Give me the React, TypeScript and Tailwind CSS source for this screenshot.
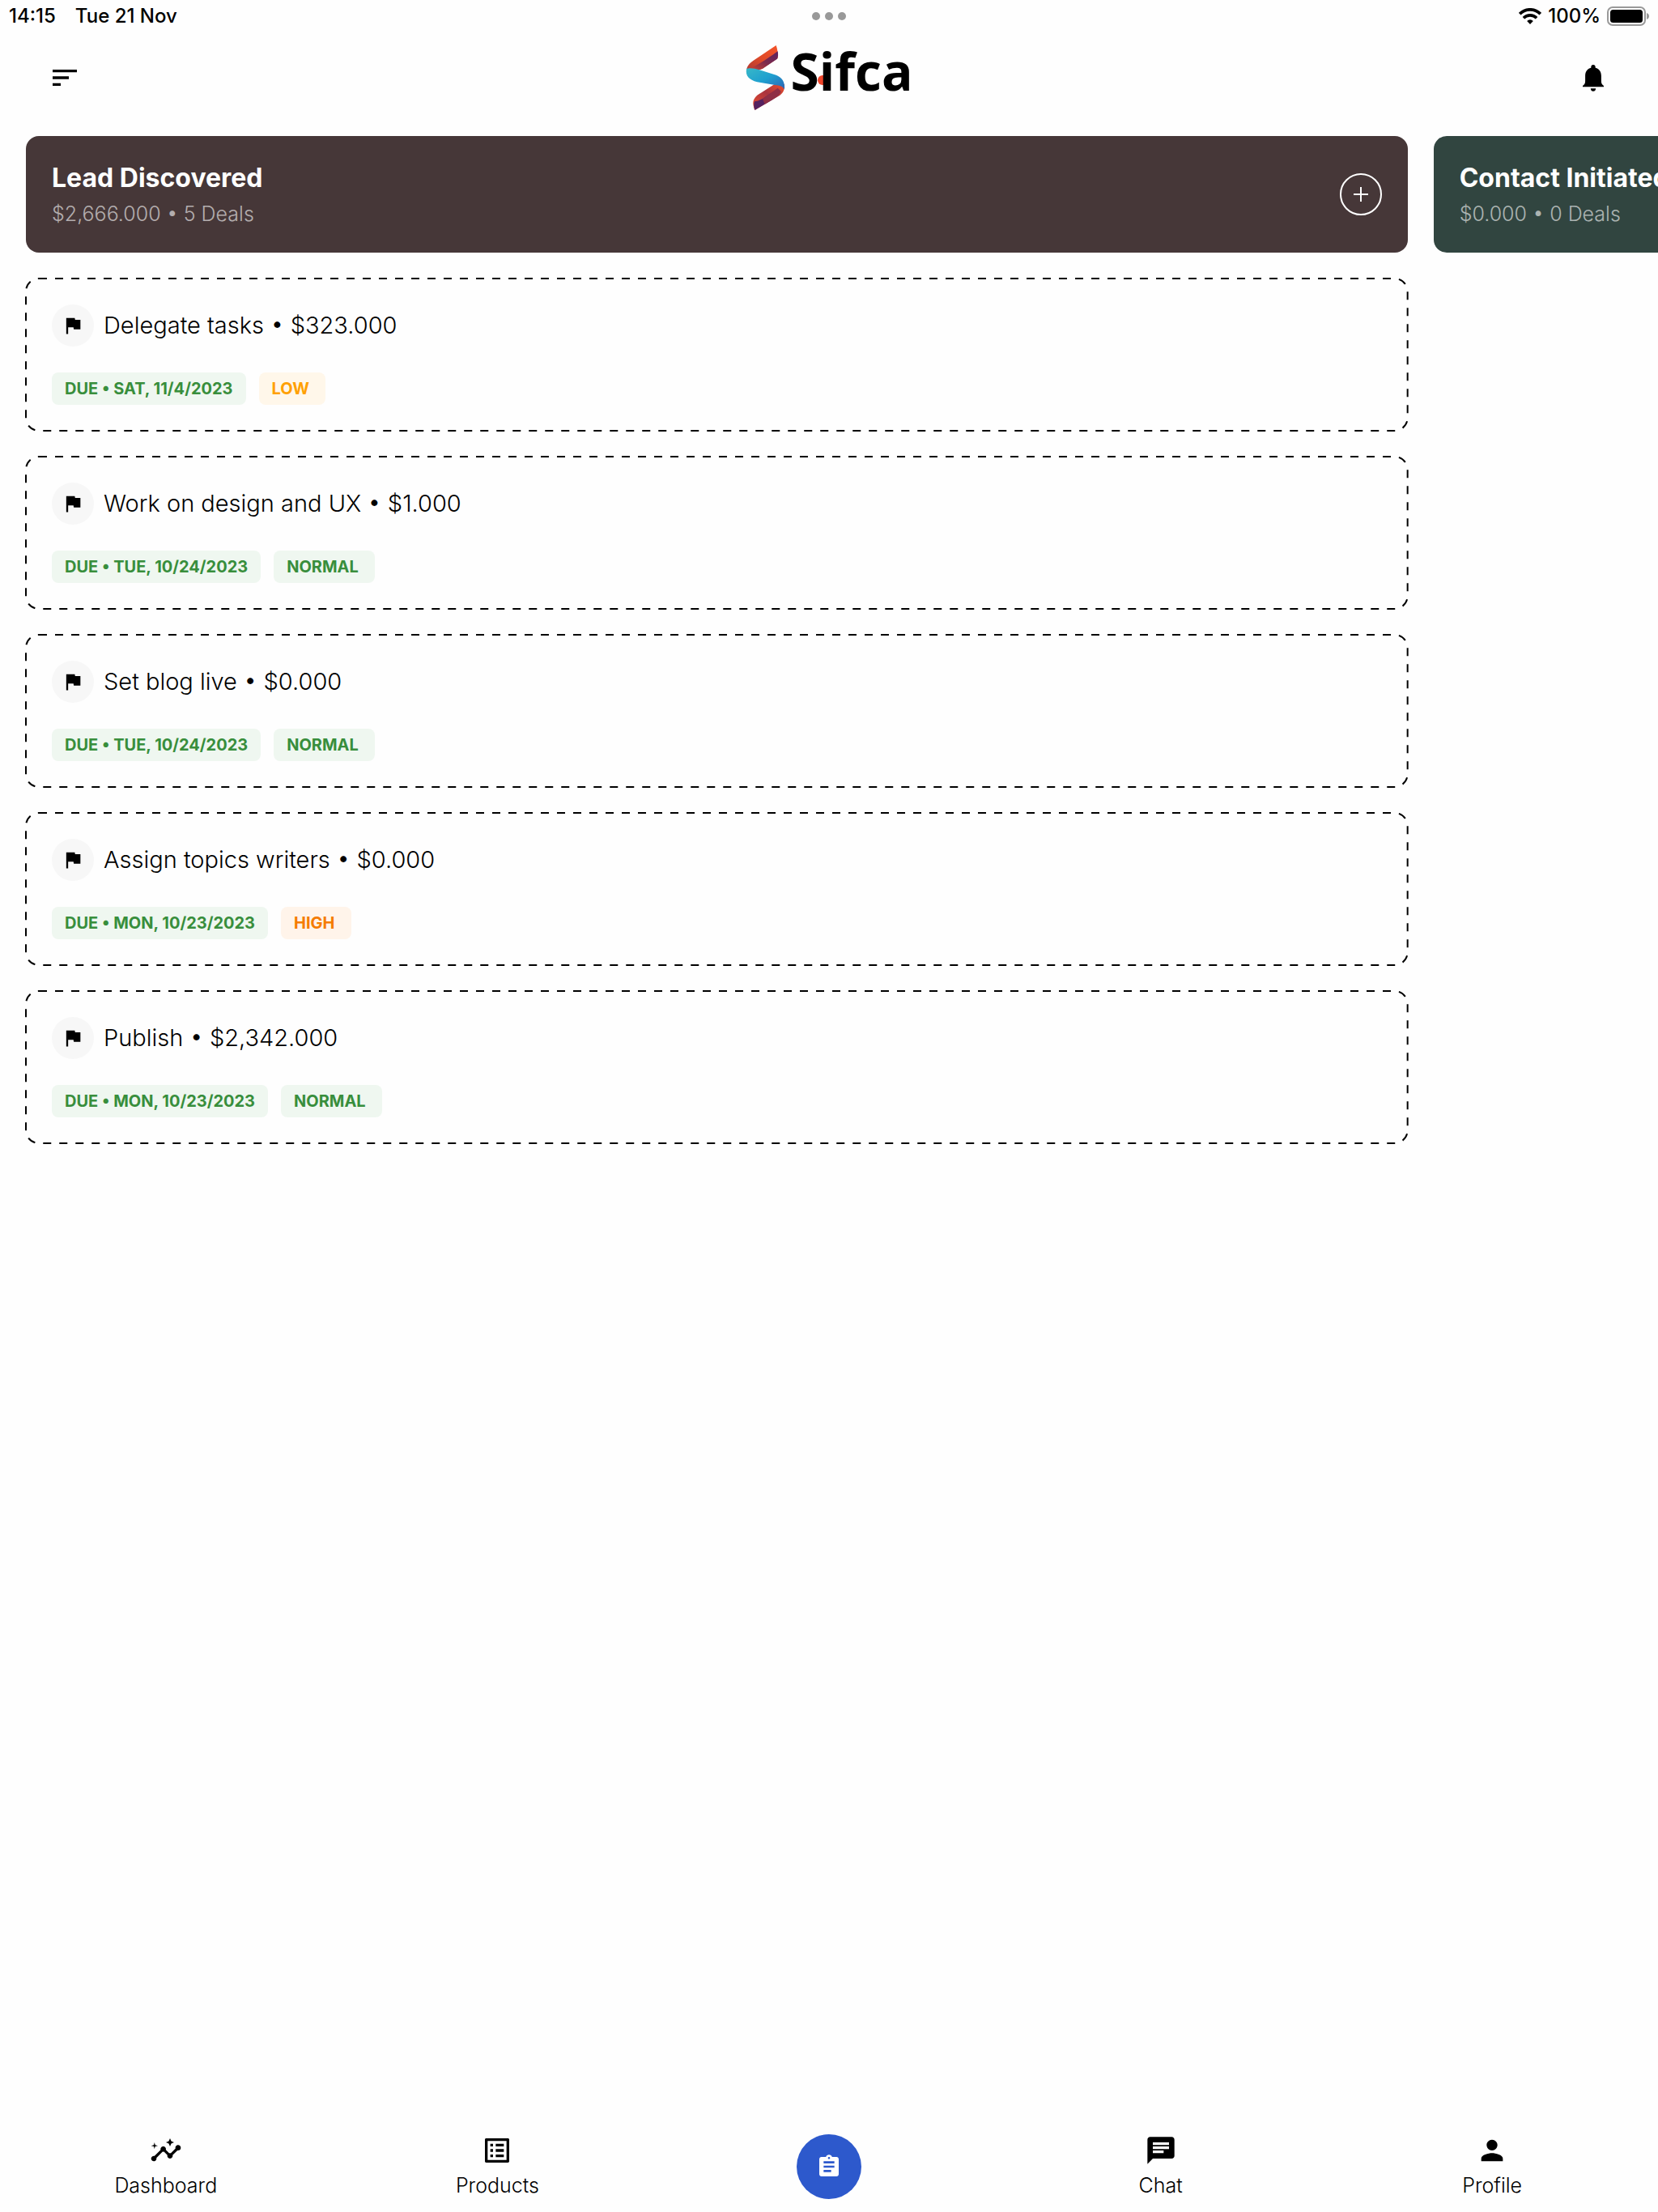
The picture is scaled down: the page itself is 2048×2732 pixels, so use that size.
import React from "react";
import {
  MdAssignment,
  MdChat,
  MdFlag,
  MdInsights,
  MdOutlineListAlt,
  MdPerson,
  MdSort,
} from "react-icons/md";

type Priority = "LOW" | "NORMAL" | "HIGH";

type Deal = {
  title: string;
  amount: string;
  due: string;
  priority: Priority;
};

type Stage = {
  name: string;
  total: string;
  color: string;
  deals: Deal[];
};

const STAGES: Stage[] = [
  {
    name: "Lead Discovered",
    total: "$2,666.000",
    color: "bg-[#463738]",
    deals: [
      { title: "Delegate tasks", amount: "$323.000", due: "SAT, 11/4/2023", priority: "LOW" },
      { title: "Work on design and UX", amount: "$1.000", due: "TUE, 10/24/2023", priority: "NORMAL" },
      { title: "Set blog live", amount: "$0.000", due: "TUE, 10/24/2023", priority: "NORMAL" },
      { title: "Assign topics writers", amount: "$0.000", due: "MON, 10/23/2023", priority: "HIGH" },
      { title: "Publish", amount: "$2,342.000", due: "MON, 10/23/2023", priority: "NORMAL" },
    ],
  },
  {
    name: "Contact Initiated",
    total: "$0.000",
    color: "bg-[#314540]",
    deals: [],
  },
];

const PRIORITY_STYLES: Record<Priority, string> = {
  LOW: "bg-[#fff7ea] text-[#ffa000]",
  NORMAL: "bg-[#eff7f0] text-[#388e3c]",
  HIGH: "bg-[#fff4ea] text-[#f57c00]",
};

const StatusBar = () => (
  <div className="grid h-10 grid-cols-3 items-center px-[11px] text-2xl font-medium">
    <div className="flex gap-6">
      <span>14:15</span>
      <span>Tue 21 Nov</span>
    </div>
    <div className="flex justify-center gap-1.5">
      <span className="size-2.5 rounded-full bg-[#999]" />
      <span className="size-2.5 rounded-full bg-[#999]" />
      <span className="size-2.5 rounded-full bg-[#999]" />
    </div>
    <div className="flex items-center justify-end gap-2">
      <svg width="28" height="20" viewBox="0 0 28 20" fill="none" stroke="#000">
        <path d="M1.2 7.200a18 18 0 0 1 25.600 0" strokeWidth="3.800" />
        <path d="M5.900 12.200a11.600 11.600 0 0 1 16.200 0" strokeWidth="3.600" />
        <path d="M14 20l-3.800-4.100a5.400 5.400 0 0 1 7.600 0z" fill="#000" stroke="none" />
      </svg>
      <span>100%</span>
      <svg width="52" height="24" viewBox="0 0 52 24">
        <rect x="1" y="1" width="46" height="22" rx="6" fill="none" stroke="#999" strokeWidth="2" />
        <rect x="4" y="4" width="40" height="16" rx="3.5" />
        <path d="M49 8c4 1.200 4 6.800 0 8z" fill="#999" />
      </svg>
    </div>
  </div>
);

const Logo = () => (
  <div className="flex items-center gap-1">
    <svg width="52" height="80" viewBox="18 24 156 240">
      <defs>
        <linearGradient id="ribbonTop" x1="0" y1="1" x2="1" y2="0">
          <stop offset="0" stopColor="#b03a35" />
          <stop offset="0.5" stopColor="#e04a28" />
          <stop offset="1" stopColor="#f4542a" />
        </linearGradient>
        <linearGradient id="ribbonShade" x1="0" y1="1" x2="1" y2="0">
          <stop offset="0" stopColor="#d8452c" />
          <stop offset="0.5" stopColor="#7c2a4c" />
          <stop offset="1" stopColor="#5b2160" />
        </linearGradient>
        <linearGradient id="ribbonMid" x1="0" y1="0" x2="1" y2="1">
          <stop offset="0" stopColor="#38b8c8" />
          <stop offset="0.5" stopColor="#1fa0cf" />
          <stop offset="1" stopColor="#2b62b4" />
        </linearGradient>
        <linearGradient id="ribbonLow" x1="0" y1="1" x2="1" y2="0">
          <stop offset="0" stopColor="#ef4e2b" />
          <stop offset="0.55" stopColor="#a8343f" />
          <stop offset="1" stopColor="#ee4f2a" />
        </linearGradient>
      </defs>
      <path d="M134 24C138 36 142 54 140 72L84 110C64 120 40 118 24 116C26 100 36 90 50 80Z" fill="url(#ribbonTop)" />
      <path d="M140 46C142 58 142 66 138 74L84 110C64 118 42 118 28 114C56 104 96 78 140 46Z" fill="url(#ribbonShade)" />
      <path d="M165 168C166 190 160 200 148 209L55 264C50 250 46 236 52 224C58 212 68 206 80 199L128 168Z" fill="url(#ribbonLow)" />
      <path d="M54 232C62 232 72 228 84 222L116 200L122 224L55 264C51 252 50 242 54 232Z" fill="#55215f" />
      <path d="M84 222L140 182L152 194C148 206 140 214 122 224L92 242Z" fill="#8f2f45" />
      <path d="M24 112C34 106 54 110 72 115L134 134C156 142 168 160 165 188C160 176 148 172 130 171L64 160C34 152 20 138 24 112Z" fill="url(#ribbonMid)" />
    </svg>
    <div className="relative mb-4">
      <span className="absolute top-[45px] left-[34px] size-3 rounded-full bg-[#f0452a]" />
      <span className="relative block font-['Open_Sans',sans-serif] text-[64px] leading-[80px] font-bold">
        Sifca
      </span>
    </div>
  </div>
);

const Header = () => (
  <header className="flex h-28 items-center justify-between px-[60px]">
    <button type="button" aria-label="Menu">
      <MdSort className="size-10" />
    </button>
    <Logo />
    <button type="button" aria-label="Notifications" className="flex size-10 items-center justify-center">
      <svg width="26" height="34" viewBox="0 -1 26 34">
        <path d="M13 0c1.700 0 2.700 1.200 2.700 2.800v.9c4.600 1.200 7.200 4.800 7.200 9.700v6.600c0 3 .8 4.300 3.100 6v1.300H0V26c2.300-1.700 3.100-3 3.100-6v-6.600c0-4.900 2.600-8.500 7.200-9.700v-.9C10.300 1.200 11.300 0 13 0z" />
        <path d="M9.800 29.200h6.400c-.2 2.300-1.400 3.600-3.200 3.600s-3-1.300-3.200-3.600z" />
      </svg>
    </button>
  </header>
);

const DealCard = ({ deal }: { deal: Deal }) => (
  <article className="relative flex flex-col gap-8 p-8">
    <svg className="pointer-events-none absolute inset-0 size-full overflow-visible" fill="none">
      <rect width="100%" height="100%" rx="16" stroke="#000" strokeWidth="2" strokeDasharray="10 10" />
    </svg>
    <div className="flex items-center gap-3">
      <span className="flex size-13 items-center justify-center rounded-full bg-[#f7f7f7]">
        <MdFlag className="size-7" />
      </span>
      <h3 className="text-[29px] leading-10 font-light">
        {deal.title} • {deal.amount}
      </h3>
    </div>
    <div className="flex gap-4 text-xl leading-10 font-bold">
      <span className="rounded-lg bg-[#eff7f0] px-4 text-[#388e3c]">DUE • {deal.due}</span>
      <span className={`rounded-lg pr-5 pl-4 ${PRIORITY_STYLES[deal.priority]}`}>{deal.priority}</span>
    </div>
  </article>
);

const StageColumn = ({ stage }: { stage: Stage }) => (
  <section className="ml-8 flex w-5/6 shrink-0 flex-col gap-8">
    <div className={`flex items-center justify-between rounded-2xl px-8 py-[26px] text-white ${stage.color}`}>
      <div className="pt-1">
        <h2 className="text-[32px] leading-11 font-bold">{stage.name}</h2>
        <p className="text-[25px] leading-11 font-light text-white/60">
          {stage.total} • {stage.deals.length} Deals
        </p>
      </div>
      <button
        type="button"
        aria-label={`Add deal to ${stage.name}`}
        className="flex size-13 items-center justify-center rounded-full border-2 border-white"
      >
        <svg width="18" height="18" viewBox="0 0 18 18" stroke="#fff" strokeWidth="2">
          <path d="M9 0v18M0 9h18" />
        </svg>
      </button>
    </div>
    {stage.deals.map((deal) => (
      <DealCard key={deal.title} deal={deal} />
    ))}
  </section>
);

const NavItem = ({ label, icon }: { label: string; icon: React.ReactNode }) => (
  <a href="#" className="flex flex-1 flex-col items-center">
    {icon}
    <span className="text-[25px] leading-[46px] font-light">{label}</span>
  </a>
);

const BottomNav = () => (
  <nav className="flex items-start pb-2.5">
    <NavItem label="Dashboard" icon={<MdInsights className="size-10" />} />
    <NavItem label="Products" icon={<MdOutlineListAlt className="size-10" />} />
    <div className="flex flex-1 justify-center">
      <button
        type="button"
        aria-label="Tasks"
        className="flex size-20 items-center justify-center rounded-full bg-[#2d59cc] text-white"
      >
        <MdAssignment className="size-8" />
      </button>
    </div>
    <NavItem label="Chat" icon={<MdChat className="size-10" />} />
    <NavItem label="Profile" icon={<MdPerson className="size-10" />} />
  </nav>
);

const App = () => {
  return (
    <div className="flex min-h-screen flex-col bg-[#fefefe] font-[Inter,sans-serif] text-black">
      <StatusBar />
      <Header />
      <main className="flex flex-1 items-start overflow-x-auto pt-4 pb-8 [scrollbar-width:none]">
        {STAGES.map((stage) => (
          <StageColumn key={stage.name} stage={stage} />
        ))}
      </main>
      <BottomNav />
    </div>
  );
};

export default App;
